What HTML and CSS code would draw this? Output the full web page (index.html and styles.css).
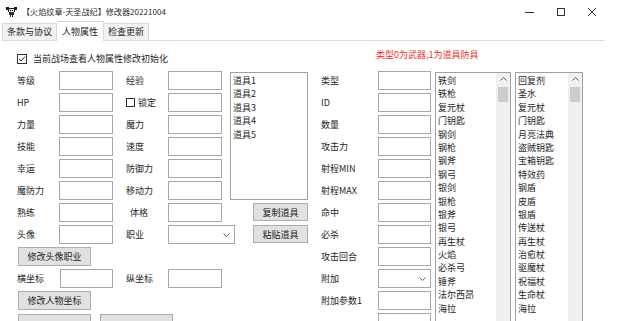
FILE: index.html
```html
<!DOCTYPE html>
<html lang="zh-CN">
<head>
    <meta charset="UTF-8">
    <title>【火焰纹章-天圣战纪】修改器20221004</title>
    <link rel="stylesheet" href="styles.css">
</head>
<body>
    <div class="title-bar">
        <svg class="app-icon" viewBox="0 0 11 11" width="11" height="11">
            <path d="M0 1h3v1h5V1h3v3H9v2H2V4H0z" fill="#1b1b1b"/>
            <rect x="3" y="3" width="5" height="3" fill="#f1e2c9"/>
            <rect x="4" y="4" width="1" height="1" fill="#000"/>
            <rect x="6" y="4" width="1" height="1" fill="#000"/>
            <path d="M3 6h5v3H7v2H6V9H5v2H4V9H3z" fill="#2b2b2b"/>
            <rect x="5" y="6" width="1" height="1" fill="#c0392b"/>
        </svg>
        <span class="title">【火焰纹章-天圣战纪】修改器20221004</span>
        <div class="win-ctrls">
            <span class="ctrl"><svg width="10" height="10"><path d="M0 5.5h9" stroke="#333"/></svg></span>
            <span class="ctrl"><svg width="10" height="10"><rect x="1.5" y="1.5" width="7" height="7" fill="none" stroke="#333"/></svg></span>
            <span class="ctrl"><svg width="10" height="10"><path d="M1 1l8 8M9 1l-8 8" stroke="#333"/></svg></span>
        </div>
    </div>

    <div class="tabs">
        <div class="tab">条款与协议</div>
        <div class="tab active">人物属性</div>
        <div class="tab">检查更新</div>
    </div>

    <div class="panel">
        <div class="top-row">
            <label class="check init-check"><span class="box checked"><svg width="8" height="8"><path d="M1 4l2 2 4-4.5" fill="none" stroke="#222" stroke-width="1"/></svg></span>当前战场查看人物属性修改初始化</label>
            <span class="note">类型0为武器,1为道具防具</span>
        </div>

        <div class="form-grid">
            <div class="listbox items-box">
                <ul>
                    <li>道具1</li>
                    <li>道具2</li>
                    <li>道具3</li>
                    <li>道具4</li>
                    <li>道具5</li>
                </ul>
            </div>

            <div class="listbox weapons">
                <ul>
                    <li>铁剑</li><li>铁枪</li><li>复元杖</li><li>门钥匙</li><li>钢剑</li>
                    <li>钢枪</li><li>钢斧</li><li>钢弓</li><li>银剑</li><li>银枪</li>
                    <li>银斧</li><li>银弓</li><li>再生杖</li><li>火焰</li><li>必杀弓</li>
                    <li>锤斧</li><li>法尔西昂</li><li>海拉</li>
                </ul>
                <div class="sb"><svg width="7" height="4"><path d="M0.5 3.5l3-3 3 3" fill="none" stroke="#555"/></svg><span class="thumb"></span></div>
            </div>

            <div class="listbox goods">
                <ul>
                    <li>回复剂</li><li>圣水</li><li>复元杖</li><li>门钥匙</li><li>月亮法典</li>
                    <li>盗贼钥匙</li><li>宝箱钥匙</li><li>特效药</li><li>钢盾</li><li>皮盾</li>
                    <li>银盾</li><li>传送杖</li><li>再生杖</li><li>治愈杖</li><li>驱魔杖</li>
                    <li>祝福杖</li><li>生命杖</li><li>海拉</li>
                </ul>
                <div class="sb"><svg width="7" height="4"><path d="M0.5 3.5l3-3 3 3" fill="none" stroke="#555"/></svg><span class="thumb"></span></div>
            </div>

            <!-- row 1 -->
            <span class="lbl c-l1">等级</span><span class="field c-i1"></span>
            <span class="lbl c-l2">经验</span><span class="field c-i2"></span>
            <span class="lbl c-l3">类型</span><span class="field c-i3"></span>
            <!-- row 2 -->
            <span class="lbl c-l1">HP</span><span class="field c-i1"></span>
            <label class="check c-l2"><span class="box small"></span>锁定</label><span class="field c-i2"></span>
            <span class="lbl c-l3">ID</span><span class="field c-i3"></span>
            <!-- row 3 -->
            <span class="lbl c-l1">力量</span><span class="field c-i1"></span>
            <span class="lbl c-l2">魔力</span><span class="field c-i2"></span>
            <span class="lbl c-l3">数量</span><span class="field c-i3"></span>
            <!-- row 4 -->
            <span class="lbl c-l1">技能</span><span class="field c-i1"></span>
            <span class="lbl c-l2">速度</span><span class="field c-i2"></span>
            <span class="lbl c-l3">攻击力</span><span class="field c-i3"></span>
            <!-- row 5 -->
            <span class="lbl c-l1">幸运</span><span class="field c-i1"></span>
            <span class="lbl c-l2">防御力</span><span class="field c-i2"></span>
            <span class="lbl c-l3">射程MIN</span><span class="field c-i3"></span>
            <!-- row 6 -->
            <span class="lbl c-l1">魔防力</span><span class="field c-i1"></span>
            <span class="lbl c-l2">移动力</span><span class="field c-i2"></span>
            <span class="lbl c-l3">射程MAX</span><span class="field c-i3"></span>
            <!-- row 7 -->
            <span class="lbl c-l1">熟练</span><span class="field c-i1"></span>
            <span class="lbl c-l2 indent">体格</span><span class="field c-i2"></span>
            <button class="btn item-btn">复制道具</button>
            <span class="lbl c-l3">命中</span><span class="field c-i3"></span>
            <!-- row 8 -->
            <span class="lbl c-l1">头像</span><span class="field c-i1"></span>
            <span class="lbl c-l2">职业</span>
            <span class="select c-i2 wide"><svg width="7" height="4"><path d="M0.5 0.5l3 3 3-3" fill="none" stroke="#666"/></svg></span>
            <button class="btn item-btn">粘贴道具</button>
            <span class="lbl c-l3">必杀</span><span class="field c-i3"></span>
            <!-- row 9 -->
            <button class="btn wide-btn">修改头像职业</button>
            <span class="lbl c-l3">攻击回合</span><span class="field c-i3"></span>
            <!-- row 10 -->
            <span class="lbl c-l1">横坐标</span><span class="field c-i1 nudge"></span>
            <span class="lbl c-l2">纵坐标</span><span class="field c-i2"></span>
            <span class="lbl c-l3">附加</span>
            <span class="select c-i3"><svg width="7" height="4"><path d="M0.5 0.5l3 3 3-3" fill="none" stroke="#666"/></svg></span>
            <!-- row 11 -->
            <button class="btn wide-btn">修改人物坐标</button>
            <span class="lbl c-l3">附加参数1</span><span class="field c-i3"></span>
            <!-- row 12 -->
            <div class="btn-row">
                <span class="btn"></span>
                <span class="btn"></span>
            </div>
            <span class="c-l3"></span><span class="field c-i3"></span>
        </div>
    </div>
</body>
</html>
```

FILE: styles.css
```css
* {
    box-sizing: border-box;
}
body {
    margin: 0;
    height: 321px;
    overflow: hidden;
    background: #fff;
    color: #1e1e1e;
    font-family: "Noto Sans CJK SC", "Microsoft YaHei", sans-serif;
    font-size: 9px;
}

/* window title */
.title-bar {
    display: flex;
    align-items: center;
    height: 21px;
    padding: 2px 0 0 6px;
}
.app-icon {
    margin-right: 5px;
}
.title {
    font-size: 8.1px;
    line-height: 12px;
    color: #2a2a2a;
}
.win-ctrls {
    display: flex;
    margin-left: auto;
    margin-right: 15px;
}
.ctrl {
    width: 31px;
    height: 19px;
    display: flex;
    align-items: center;
    justify-content: center;
}

/* tabs */
.tabs {
    display: flex;
    align-items: flex-end;
    height: 19px;
    padding-left: 2px;
}
.tab {
    height: 17px;
    line-height: 16px;
    padding: 0 4px;
    background: #f2f2f2;
    border: 1px solid #d9d9d9;
    border-bottom: none;
}
.tab + .tab {
    border-left: none;
}
.tab.active {
    position: relative;
    height: 20px;
    margin-bottom: -1px;
    line-height: 20px;
    padding: 0 5px;
    background: #fff;
}
.panel {
    margin: 0 18px 0 2px;
    border-top: 1px solid #dadada;
    padding: 10px 0 0 15px;
}

/* top row */
.top-row {
    display: flex;
    align-items: flex-start;
    height: 13px;
}
.check {
    display: flex;
    align-items: center;
    line-height: 13px;
    white-space: nowrap;
}
.init-check {
    flex: 0 0 359px;
    padding-top: 1px;
}
.box {
    display: inline-flex;
    align-items: center;
    justify-content: center;
    width: 10px;
    height: 10px;
    margin-right: 6px;
    border: 1px solid #333;
    background: #fff;
}
.box.small {
    width: 9px;
    height: 9px;
    margin-right: 3px;
}
.note {
    color: #f0302a;
    line-height: 12px;
    margin-top: -2px;
}

/* form */
.form-grid {
    display: grid;
    grid-template-columns: 42px 54px 13px 42px 54px 8px 78px 13px 57px 53px 4px 76px 4px 68px;
    grid-auto-rows: 19px;
    row-gap: 3px;
    margin-top: 7px;
}
.c-l1 { grid-column: 1; }
.c-i1 { grid-column: 2; }
.c-l2 { grid-column: 4; }
.c-i2 { grid-column: 5; }
.c-l3 { grid-column: 9; }
.c-i3 { grid-column: 10; }

.lbl {
    line-height: 19px;
    white-space: nowrap;
}
.lbl.indent {
    padding-left: 4px;
}
.check.c-l2 {
    line-height: 19px;
}
.field {
    height: 19px;
    border: 1px solid #a7a7a7;
    background: #fff;
}
.field.nudge {
    margin-left: 1px;
}
.select {
    display: flex;
    align-items: center;
    justify-content: flex-end;
    height: 19px;
    padding-right: 4px;
    border: 1px solid #a7a7a7;
    background: #fff;
}
.select.wide {
    width: 67px;
}
.btn {
    height: 19px;
    padding: 0;
    border: 1px solid #adadad;
    background: #e1e1e1;
    color: #1e1e1e;
    font: inherit;
}
.item-btn {
    grid-column: 7;
    justify-self: end;
    width: 55px;
    height: 18px;
}
.wide-btn {
    grid-column: 1 / span 3;
    justify-self: start;
    width: 73px;
    margin-left: 1px;
}
.btn-row {
    grid-column: 1 / span 8;
    display: flex;
    gap: 9px;
    padding: 1px 0 0 1px;
}
.btn-row .btn {
    width: 73px;
}

/* list boxes */
.listbox {
    display: flex;
    border: 1px solid #a0a0a0;
    background: #fff;
    overflow: hidden;
}
.listbox ul {
    flex: 1;
    list-style: none;
    margin: 0;
    padding: 1px 0 0 2px;
}
.listbox li {
    height: 13.4px;
    line-height: 13.4px;
    white-space: nowrap;
}
.items-box {
    grid-column: 7;
    grid-row: 1 / span 6;
    margin-top: 1px;
}
.weapons,
.goods {
    grid-row: 1 / span 12;
    align-self: start;
    height: 300px;
    margin-top: 1px;
}
.weapons { grid-column: 12; }
.goods { grid-column: 14; }
.sb {
    display: flex;
    flex-direction: column;
    align-items: center;
    width: 14px;
    padding-top: 4px;
    background: #f0f0f0;
}
.thumb {
    width: 10px;
    height: 15px;
    margin-top: 6px;
    background: #cdcdcd;
}
```
